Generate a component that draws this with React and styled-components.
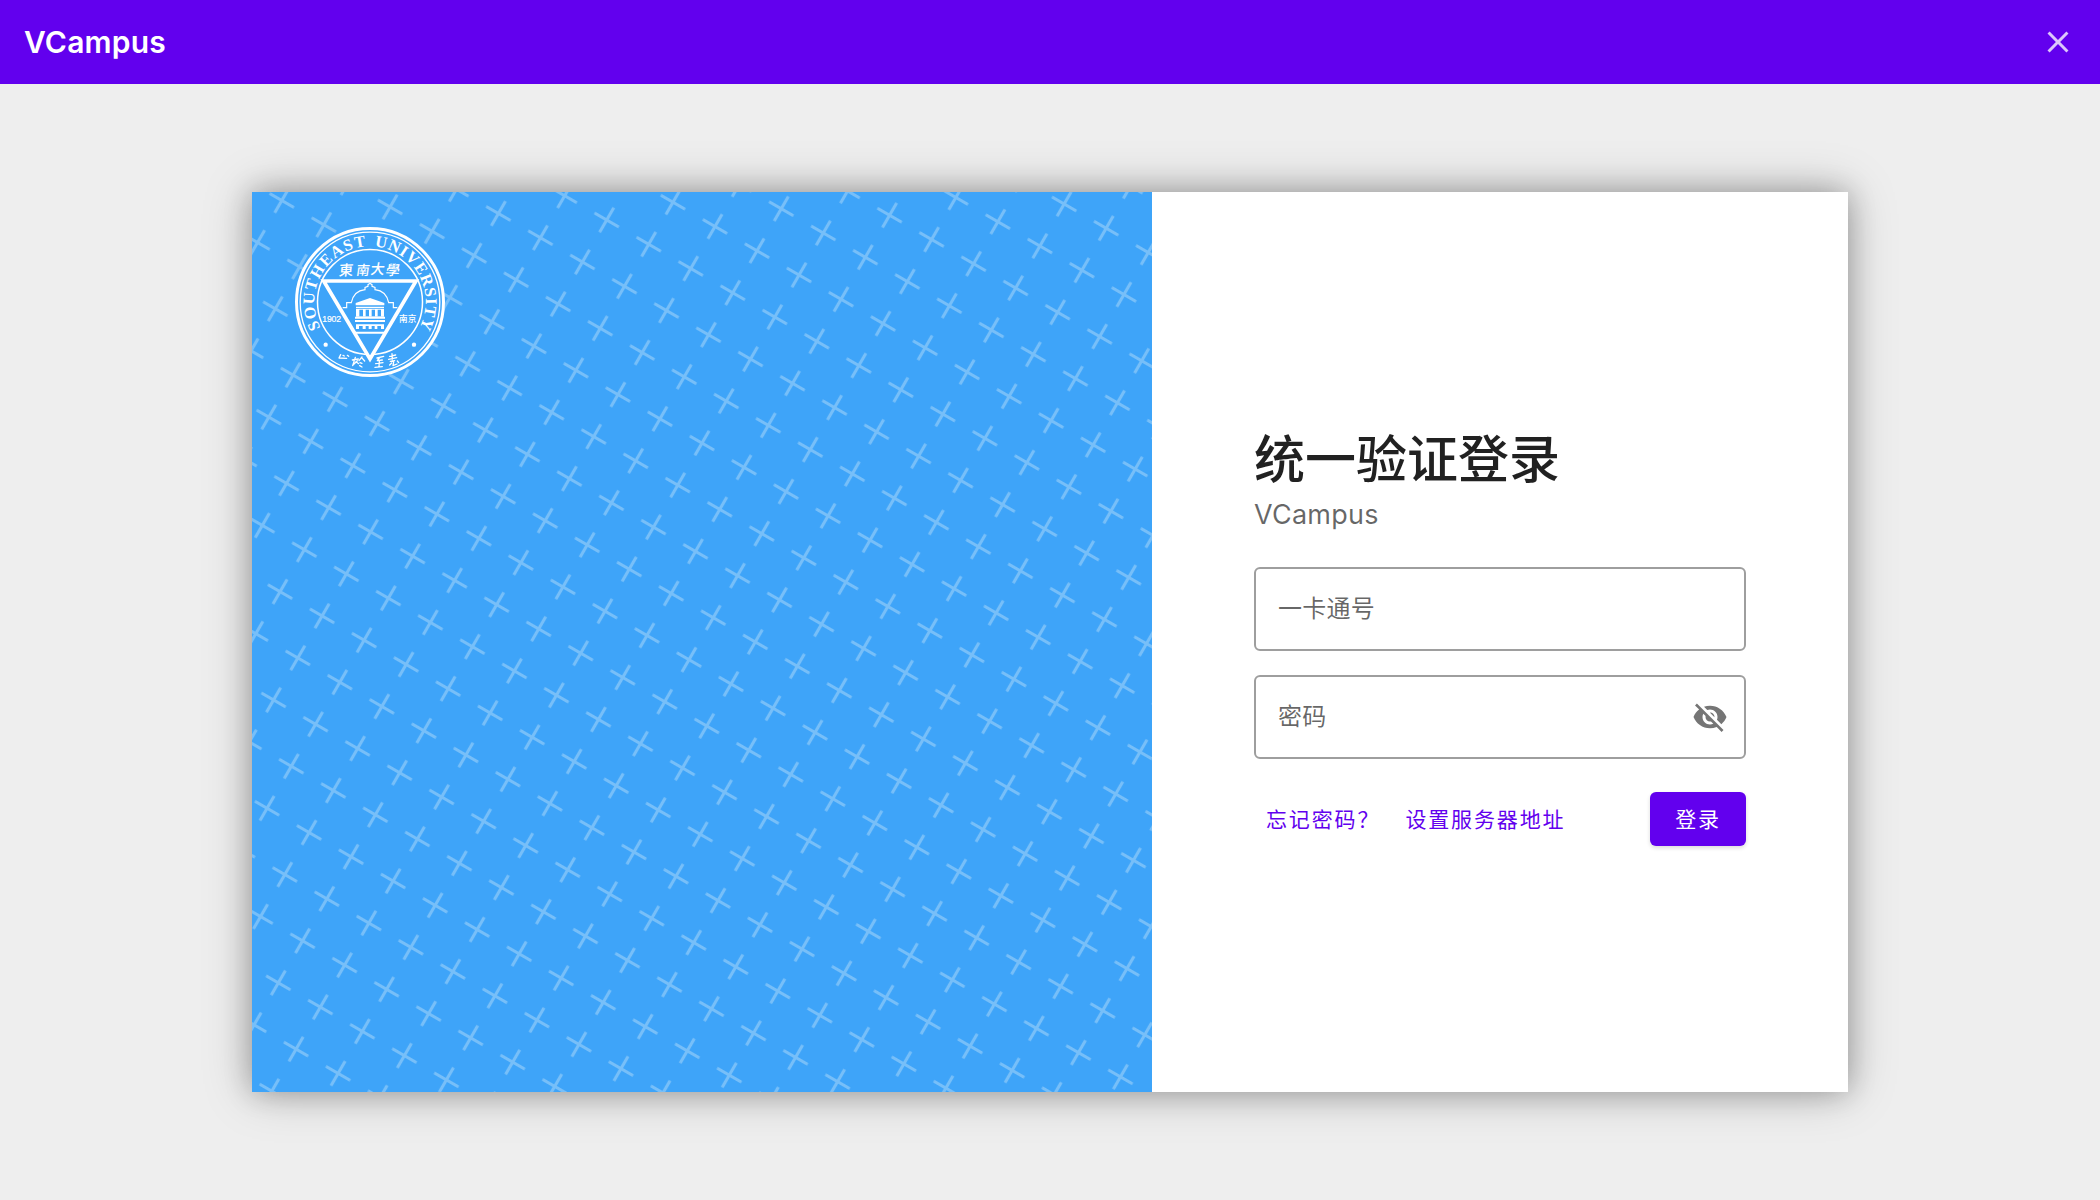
import React from "react";
import styled, { createGlobalStyle } from "styled-components";

const GlobalStyle = createGlobalStyle`
  * { box-sizing: border-box; }
  body {
    margin: 0;
    background: #eeeeee;
    font-family: Inter, "Noto Sans CJK SC", sans-serif;
    -webkit-font-smoothing: antialiased;
  }
  button, input { font-family: inherit; }
`;

const Page = styled.div`
  display: flex;
  flex-direction: column;
  height: 1200px;
  overflow: hidden;
`;

const TopBar = styled.header`
  display: flex;
  align-items: center;
  justify-content: space-between;
  flex: none;
  height: 84px;
  padding: 0 6px 0 24px;
  background: #6200ee;
  color: #fff;
`;

const AppName = styled.h1`
  margin: 0;
  font-size: 30px;
  font-weight: 600;
  line-height: 48px;
  letter-spacing: 0.18px;
`;

const IconButton = styled.button`
  display: grid;
  place-items: center;
  width: ${(p) => p.$size}px;
  height: ${(p) => p.$size}px;
  padding: 0;
  border: 0;
  background: none;
  color: ${(p) => p.$color};

  svg {
    width: 36px;
    height: 36px;
    fill: currentColor;
  }
`;

const Main = styled.main`
  display: flex;
  flex: 1;
  align-items: center;
  justify-content: center;
`;

const Card = styled.section`
  display: flex;
  width: 1596px;
  height: 900px;
  background: #fff;
  box-shadow: 0 0 45px rgba(0, 0, 0, 0.26), 0 0 26px rgba(0, 0, 0, 0.22);
`;

const Cover = styled.div`
  display: grid;
  flex: none;
  width: 900px;
  height: 900px;
  overflow: hidden;
  background: #3ea4f9;

  > * { grid-area: 1 / 1; }
`;

const Backdrop = styled.svg`
  width: 900px;
  height: 900px;
`;

const Emblem = styled.svg`
  width: 150px;
  height: 150px;
  margin: 34.5px 0 0 43px;
`;

const Panel = styled.div`
  display: flex;
  flex: 1;
  flex-direction: column;
  padding: 238px 102px 0;
`;

const Title = styled.h2`
  margin: 0;
  color: rgba(0, 0, 0, 0.87);
  font-size: 51px;
  font-weight: 500;
  line-height: 60px;
`;

const Subtitle = styled.p`
  margin: 5px 0 0;
  color: rgba(0, 0, 0, 0.6);
  font-size: 27px;
  font-weight: 400;
  line-height: 40px;
  letter-spacing: 0.25px;
`;

const Form = styled.form`
  display: flex;
  flex-direction: column;
  gap: 24px;
  margin-top: 32px;
`;

const Field = styled.label`
  display: flex;
  align-items: center;
  height: 84px;
  padding: 0 16px 0 22px;
  border: 2px solid #9e9e9e;
  border-radius: 6px;
`;

const Input = styled.input`
  flex: 1;
  min-width: 0;
  padding: 0;
  border: 0;
  outline: 0;
  background: none;
  font-size: 24px;
  line-height: 36px;
  letter-spacing: 0.225px;

  &::placeholder {
    color: rgba(0, 0, 0, 0.6);
    opacity: 1;
  }
`;

const Actions = styled.div`
  display: flex;
  align-items: center;
  gap: 1px;
  margin-top: 9px;
`;

const Button = styled.button`
  min-width: 96px;
  height: 54px;
  padding: 0 ${(p) => (p.$raised ? 24 : 12)}px 3px;
  margin-left: ${(p) => (p.$raised ? "auto" : 0)};
  border: 0;
  border-radius: 6px;
  background: ${(p) => (p.$raised ? "#6200ee" : "none")};
  box-shadow: ${(p) => (p.$raised ? "0 2px 4px rgba(0, 0, 0, 0.14)" : "none")};
  color: ${(p) => (p.$raised ? "#fff" : "#6200ee")};
  font-size: 21px;
  font-weight: 400;
  letter-spacing: 1.875px;
  white-space: nowrap;
`;

function CrossPattern() {
  return (
    <Backdrop viewBox="0 0 900 900" aria-hidden="true">
      <defs>
        <pattern
          id="crosses"
          width="48.52"
          height="48.52"
          patternUnits="userSpaceOnUse"
          patternTransform="translate(29.8 8.5) rotate(30) translate(-24.26 -24.26)"
        >
          <path
            d="M10.26 24.26H38.26M24.26 10.26V38.26"
            fill="none"
            stroke="#77bff9"
            strokeWidth="3.1"
          />
        </pattern>
      </defs>
      <rect width="900" height="900" fill="url(#crosses)" />
    </Backdrop>
  );
}

function UniversityEmblem() {
  return (
    <Emblem viewBox="0 0 450 450" role="img" aria-label="Southeast University">
      <defs>
        <path id="ring-text" d="M77.5 303.4A167 167 0 1 1 372.5 303.4" />
      </defs>
      <circle cx="225" cy="225" r="224" fill="#3ea4f9" />
      <g fill="none" stroke="#fff">
        <circle cx="225" cy="225" r="220.5" strokeWidth="9" />
        <circle cx="225" cy="225" r="209.5" strokeWidth="4" />
        <circle cx="225" cy="225" r="157.5" strokeWidth="4.5" />
      </g>
      <path d="M86 162H363L225 396Z" fill="#3ea4f9" stroke="#fff" strokeWidth="11" />
      <g fill="#fff">
        <g fontFamily="'Liberation Serif', serif" fontSize="49" fontWeight="700">
          <text>
            <textPath href="#ring-text" startOffset="1" textLength="331">SOUTHEAST</textPath>
          </text>
          <text>
            <textPath href="#ring-text" startOffset="357" textLength="329">UNIVERSITY</textPath>
          </text>
        </g>
        <g fontFamily="'Noto Sans CJK TC', sans-serif" fontWeight="500" textAnchor="middle">
          <text transform="translate(152 145) rotate(-3) skewX(-8)" fontSize="43">東</text>
          <text transform="translate(202 144) skewX(-8)" fontSize="40">南</text>
          <text transform="translate(246 142) skewX(-8)" fontSize="42">大</text>
          <text transform="translate(291 144) rotate(3) skewX(-8)" fontSize="42">學</text>
        </g>
        <text x="82" y="284" fontFamily="'Liberation Sans', sans-serif" fontSize="26" stroke="#fff" strokeWidth="0.6" textLength="56">1902</text>
        <text x="312" y="285" fontFamily="'Noto Sans CJK SC', sans-serif" fontSize="26" fontWeight="500">南京</text>
        <circle cx="92" cy="353" r="6.5" />
        <circle cx="357" cy="353" r="6.5" />
        <path d="M182 228 225 213 268 228V235H182ZM183 239H267V244H183ZM180 269H270V275H180ZM180 279H270V285H180ZM177 314H273V320H177Z" />
        <path fillRule="evenodd" d="M183 246H267V269H183ZM193 248V268H204V248ZM212 248V268H222V248ZM230 248V268H240V248ZM248 248V268H258V248Z" />
        <path d="M183 292H267V306H258V297H247V306H239V297H230V306H221V297H212V306H203V297H192V306H183Z" />
      </g>
      <path
        d="M143 242H155V227H169C174 202 191 190 210 188V181L219 178V173L225 169 231 173V178L240 181V188C259 190 276 202 281 227H295V242H307"
        fill="none"
        stroke="#fff"
        strokeWidth="3.5"
      />
      <g fill="none" stroke="#fff" strokeWidth="4" strokeLinecap="round" strokeLinejoin="round">
        <path d="M137 383 132 393 155 394M144 385 148 387M157 385 161 388" />
        <path d="M181 391 173 416M172 399 190 396M187 401 174 414M183 404 191 410M201 390 192 401M202 394 209 402M195 407 201 409M194 416 201 420" />
        <path d="M246 393 266 388M253 393 247 401 262 399M242 410 264 407M253 401 252 420M240 421 262 419" />
        <path d="M284 388 302 384M291 380 292 398M281 397 305 392M286 403 299 401M290 408 284 414M296 405 294 416 306 411M307 402 311 407" />
      </g>
    </Emblem>
  );
}

function CloseIcon() {
  return (
    <svg viewBox="0 0 24 24">
      <path d="M19 6.41 17.59 5 12 10.59 6.41 5 5 6.41 10.59 12 5 17.59 6.41 19 12 13.41 17.59 19 19 17.59 13.41 12z" />
    </svg>
  );
}

function VisibilityOffIcon() {
  return (
    <svg viewBox="0 0 24 24">
      <path d="M12 7c2.76 0 5 2.24 5 5 0 .65-.13 1.26-.36 1.83l2.92 2.92c1.51-1.26 2.7-2.89 3.43-4.75-1.73-4.39-6-7.5-11-7.5-1.4 0-2.74.25-3.98.7l2.16 2.16C10.74 7.13 11.35 7 12 7zM2 4.27l2.28 2.28.46.46C3.08 8.3 1.78 10.02 1 12c1.73 4.39 6 7.5 11 7.5 1.55 0 3.03-.3 4.38-.84l.42.42L19.73 22 21 20.73 3.27 3 2 4.27zM7.53 9.8l1.55 1.55c-.05.21-.08.43-.08.65 0 1.66 1.34 3 3 3 .22 0 .44-.03.65-.08l1.55 1.55c-.67.33-1.41.53-2.2.53-2.76 0-5-2.24-5-5 0-.79.2-1.53.53-2.2zm4.31-.78 3.15 3.15.02-.16c0-1.66-1.34-3-3-3l-.17.01z" />
    </svg>
  );
}

export default function App() {
  return (
    <Page>
      <GlobalStyle />
      <TopBar>
        <AppName>VCampus</AppName>
        <IconButton $size={72} $color="rgba(255, 255, 255, 0.78)" aria-label="关闭">
          <CloseIcon />
        </IconButton>
      </TopBar>
      <Main>
        <Card>
          <Cover>
            <CrossPattern />
            <UniversityEmblem />
          </Cover>
          <Panel>
            <Title>统一验证登录</Title>
            <Subtitle>VCampus</Subtitle>
            <Form onSubmit={(e) => e.preventDefault()}>
              <Field>
                <Input placeholder="一卡通号" />
              </Field>
              <Field>
                <Input type="password" placeholder="密码" />
                <IconButton type="button" $size={36} $color="#757575" aria-label="显示密码">
                  <VisibilityOffIcon />
                </IconButton>
              </Field>
              <Actions>
                <Button type="button">忘记密码？</Button>
                <Button type="button">设置服务器地址</Button>
                <Button $raised>登录</Button>
              </Actions>
            </Form>
          </Panel>
        </Card>
      </Main>
    </Page>
  );
}
